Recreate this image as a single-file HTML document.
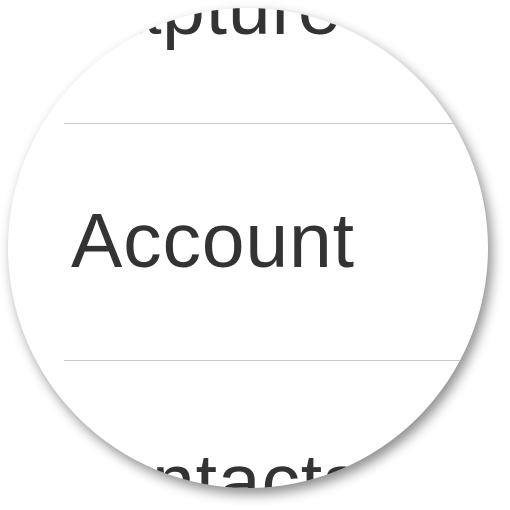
<!DOCTYPE html>
<html><head><style>
html,body{margin:0;padding:0;background:#fff;width:510px;height:510px;overflow:hidden}
.c{position:absolute;left:8px;top:8px;width:480px;height:480px;border-radius:50%;background:#fff;overflow:hidden;box-shadow:4px 6px 12px rgba(0,0,0,0.45)}
svg{position:absolute;left:-8px;top:-8px}
</style></head><body>
<div class="c">
<svg width="496" height="496" xmlns="http://www.w3.org/2000/svg">
<g font-family="Liberation Sans, Arial, sans-serif" font-size="77" fill="#333">
<text x="62" y="34" letter-spacing="0.8">Capture</text>
<text x="71" y="267" letter-spacing="0.8">Account</text>
<text x="52" y="508" letter-spacing="0.8">Contacts</text>
</g>
<rect x="64" y="123" width="440" height="1" fill="#c8c8cc"/>
<rect x="64" y="360" width="440" height="1" fill="#c8c8cc"/>
</svg>
</div>
</body></html>
